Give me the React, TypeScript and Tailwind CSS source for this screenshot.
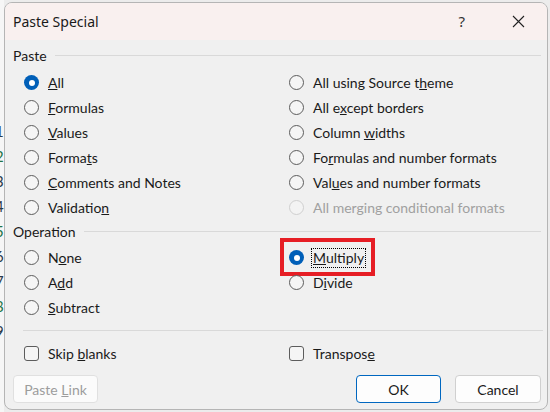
import type { ReactNode } from 'react';

type Opt = { label: ReactNode; checked?: boolean; disabled?: boolean; focus?: boolean };

function Radio({ checked, disabled }: { checked?: boolean; disabled?: boolean }) {
  if (checked) {
    return (
      <span className="w-[15px] h-[15px] rounded-full bg-[#005fb8] flex items-center justify-center shrink-0">
        <span className="w-[6px] h-[6px] rounded-full bg-white" />
      </span>
    );
  }
  return (
    <span
      className={
        disabled
          ? 'w-[15px] h-[15px] rounded-full border border-[#cfcfcf] bg-[#f3f3f3] shrink-0'
          : 'w-[15px] h-[15px] rounded-full border border-[#5c5c5c] bg-[#f5f5f5] shrink-0'
      }
    />
  );
}

function Row({ opt }: { opt: Opt }) {
  return (
    <div className="relative h-[25px] flex items-center gap-[9px]">
      <Radio checked={opt.checked} disabled={opt.disabled} />
      {opt.focus ? (
        <span className="-ml-[2px] h-[20px] px-[1px] flex items-center border border-dotted border-black">{opt.label}</span>
      ) : (
        <span className={opt.disabled ? 'text-[#a0a0a0]' : ''}>{opt.label}</span>
      )}
      {opt.focus && (
        <div className="absolute -left-[9px] -top-[7px] w-[95px] h-[38px] border-[4px] border-[#e61e25]" />
      )}
    </div>
  );
}

function GroupHeader({ title }: { title: string }) {
  return (
    <div className="h-[16px] flex items-center gap-[8px] pl-[8px] pr-[6px]">
      <span className="text-[#1a1a1a]">{title}</span>
      <div className="flex-1 h-px bg-[#d9d9d9]" />
    </div>
  );
}

const pasteLeft: Opt[] = [
  { label: <><u>A</u>ll</>, checked: true },
  { label: <><u>F</u>ormulas</> },
  { label: <><u>V</u>alues</> },
  { label: <>Forma<u>t</u>s</> },
  { label: <><u>C</u>omments and Notes</> },
  { label: <>Validatio<u>n</u></> },
];

const pasteRight: Opt[] = [
  { label: <>All using Source t<u>h</u>eme</> },
  { label: <>All e<u>x</u>cept borders</> },
  { label: <>Column <u>w</u>idths</> },
  { label: <>Fo<u>r</u>mulas and number formats</> },
  { label: <>Val<u>u</u>es and number formats</> },
  { label: <>All mer<u>g</u>ing conditional formats</>, disabled: true },
];

const opLeft: Opt[] = [
  { label: <>N<u>o</u>ne</> },
  { label: <>A<u>d</u>d</> },
  { label: <><u>S</u>ubtract</> },
];

const opRight: Opt[] = [
  { label: <><u>M</u>ultiply</>, checked: true, focus: true },
  { label: <>D<u>i</u>vide</> },
];

const rowNums = ['1', '2', '3', '4', '5', '6', '7', '8', '9'];

export default function App() {
  return (
    <div className="w-[550px] h-[412px] bg-[#ececec] flex overflow-hidden font-['Lato','Noto_Sans',sans-serif] text-[14px] text-[#1a1a1a]">
      <div className="w-[4px] shrink-0 overflow-hidden bg-[#f6f6f6] pt-[120px]">
        <div className="-ml-[5px] flex flex-col">
          {rowNums.map((n, i) => (
            <div key={i} className={i % 3 === 1 ? 'h-[25px] text-[15px] text-[#217346]' : 'h-[25px] text-[15px] text-[#2a3a4a]'}>
              {n}
            </div>
          ))}
        </div>
      </div>

      <div className="mt-[2px] w-[544px] h-[408px] shrink-0 rounded-[8px] border border-[#b5b5b5] bg-[#f0f0f0] flex flex-col overflow-hidden">
        <div className="h-[37px] shrink-0 bg-[#f9f0ef] flex items-center pl-[8px] font-['Noto_Sans',sans-serif]">
          <span className="text-[14px] text-[#1a1a1a]">Paste Special</span>
          <span className="ml-auto text-[15px] text-[#333]">?</span>
          <svg className="ml-[47px] mr-[22px]" width="13" height="13" viewBox="0 0 13 13">
            <path d="M1 1 L12 12 M12 1 L1 12" stroke="#222" strokeWidth="1.1" fill="none" />
          </svg>
        </div>

        <div className="mt-[7px]">
          <GroupHeader title="Paste" />
        </div>
        <div className="mt-[7px] grid grid-cols-[265px_1fr] pl-[19px]">
          <div>
            {pasteLeft.map((o, i) => (
              <Row key={i} opt={o} />
            ))}
          </div>
          <div>
            {pasteRight.map((o, i) => (
              <Row key={i} opt={o} />
            ))}
          </div>
        </div>

        <div className="mt-[3px]">
          <GroupHeader title="Operation" />
        </div>
        <div className="mt-[6px] grid grid-cols-[265px_1fr] pl-[19px]">
          <div>
            {opLeft.map((o, i) => (
              <Row key={i} opt={o} />
            ))}
          </div>
          <div>
            {opRight.map((o, i) => (
              <Row key={i} opt={o} />
            ))}
          </div>
        </div>

        <div className="mt-[10px] ml-[18px] mr-[4px] h-px bg-[#d9d9d9]" />

        <div className="mt-[10px] grid grid-cols-[265px_1fr] pl-[19px]">
          <div className="h-[25px] flex items-center gap-[9px]">
            <span className="w-[15px] h-[15px] rounded-[3px] border border-[#5c5c5c] bg-[#f5f5f5]" />
            <span>Skip <u>b</u>lanks</span>
          </div>
          <div className="h-[25px] flex items-center gap-[9px]">
            <span className="w-[15px] h-[15px] rounded-[3px] border border-[#5c5c5c] bg-[#f5f5f5]" />
            <span>Transpos<u>e</u></span>
          </div>
        </div>

        <div className="mt-[9px] flex items-center pl-[8px] pr-[6px]">
          <button className="w-[85px] h-[28px] rounded-[4px] border border-[#e0e0e0] bg-[#fbfbfb] text-[#9d9d9d]">
            Paste <u>L</u>ink
          </button>
          <button className="ml-auto w-[85px] h-[28px] rounded-[4px] border border-[#0067c0] bg-[#fdfdfd]">
            OK
          </button>
          <button className="ml-[14px] w-[86px] h-[28px] rounded-[4px] border border-[#d0d0d0] bg-[#fdfdfd]">
            Cancel
          </button>
        </div>
      </div>
    </div>
  );
}
